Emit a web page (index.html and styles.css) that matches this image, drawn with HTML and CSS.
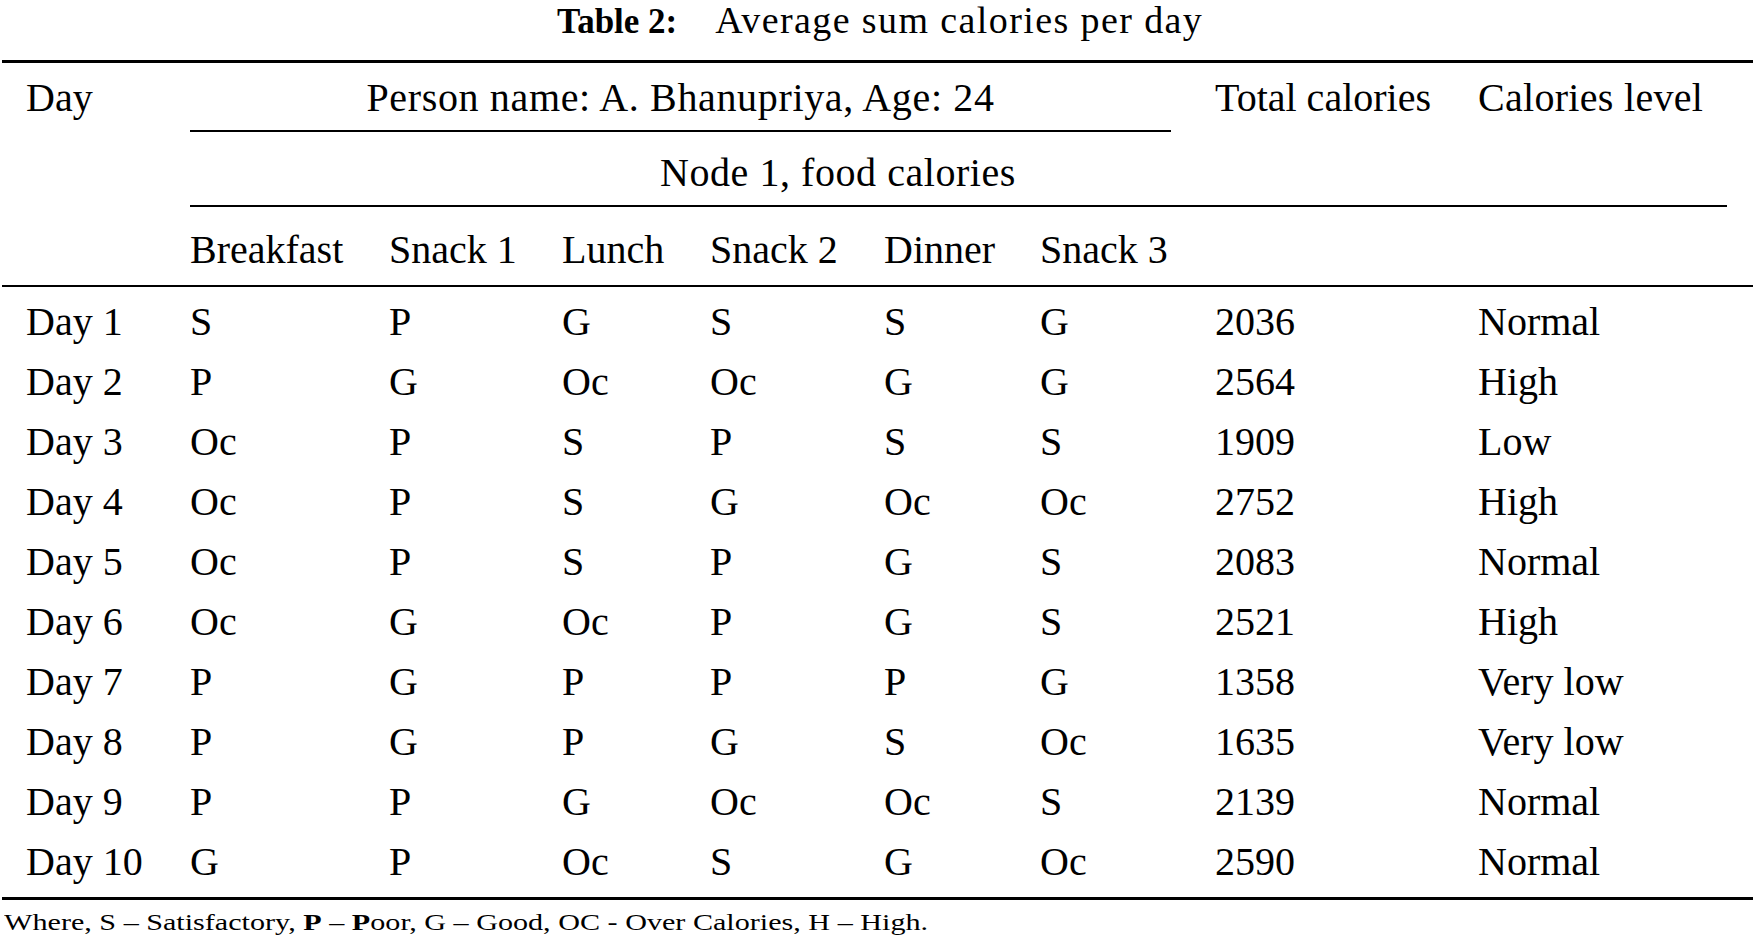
FILE: index.html
```html
<!DOCTYPE html>
<html lang="en">
<head>
<meta charset="utf-8">
<title>Table 2: Average sum calories per day</title>
<link rel="stylesheet" href="styles.css">
</head>
<body>
<div class="page">
  <div class="caption"><span class="cap-label">Table 2:</span> <span class="cap-text">Average sum calories per day</span></div>
  <div class="rule rule-top"></div>
  <div class="head">
    <div class="cell h1 c-day">Day</div>
    <div class="cell h1 c-person">Person name: A. Bhanupriya, Age: 24</div>
    <div class="cell h1 c-total">Total calories</div>
    <div class="cell h1 c-level">Calories level</div>
    <div class="rule rule-1"></div>
    <div class="cell h2 c-node">Node 1, food calories</div>
    <div class="rule rule-2"></div>
    <div class="cell h3 c2">Breakfast</div>
    <div class="cell h3 c3">Snack 1</div>
    <div class="cell h3 c4">Lunch</div>
    <div class="cell h3 c5">Snack 2</div>
    <div class="cell h3 c6">Dinner</div>
    <div class="cell h3 c7">Snack 3</div>
  </div>
  <div class="rule rule-mid"></div>
  <div class="body">
    <div class="row"><div class="cell first">Day 1</div><div class="cell">S</div><div class="cell">P</div><div class="cell">G</div><div class="cell">S</div><div class="cell">S</div><div class="cell">G</div><div class="cell">2036</div><div class="cell">Normal</div></div>
    <div class="row"><div class="cell first">Day 2</div><div class="cell">P</div><div class="cell">G</div><div class="cell">Oc</div><div class="cell">Oc</div><div class="cell">G</div><div class="cell">G</div><div class="cell">2564</div><div class="cell">High</div></div>
    <div class="row"><div class="cell first">Day 3</div><div class="cell">Oc</div><div class="cell">P</div><div class="cell">S</div><div class="cell">P</div><div class="cell">S</div><div class="cell">S</div><div class="cell">1909</div><div class="cell">Low</div></div>
    <div class="row"><div class="cell first">Day 4</div><div class="cell">Oc</div><div class="cell">P</div><div class="cell">S</div><div class="cell">G</div><div class="cell">Oc</div><div class="cell">Oc</div><div class="cell">2752</div><div class="cell">High</div></div>
    <div class="row"><div class="cell first">Day 5</div><div class="cell">Oc</div><div class="cell">P</div><div class="cell">S</div><div class="cell">P</div><div class="cell">G</div><div class="cell">S</div><div class="cell">2083</div><div class="cell">Normal</div></div>
    <div class="row"><div class="cell first">Day 6</div><div class="cell">Oc</div><div class="cell">G</div><div class="cell">Oc</div><div class="cell">P</div><div class="cell">G</div><div class="cell">S</div><div class="cell">2521</div><div class="cell">High</div></div>
    <div class="row"><div class="cell first">Day 7</div><div class="cell">P</div><div class="cell">G</div><div class="cell">P</div><div class="cell">P</div><div class="cell">P</div><div class="cell">G</div><div class="cell">1358</div><div class="cell">Very low</div></div>
    <div class="row"><div class="cell first">Day 8</div><div class="cell">P</div><div class="cell">G</div><div class="cell">P</div><div class="cell">G</div><div class="cell">S</div><div class="cell">Oc</div><div class="cell">1635</div><div class="cell">Very low</div></div>
    <div class="row"><div class="cell first">Day 9</div><div class="cell">P</div><div class="cell">P</div><div class="cell">G</div><div class="cell">Oc</div><div class="cell">Oc</div><div class="cell">S</div><div class="cell">2139</div><div class="cell">Normal</div></div>
    <div class="row"><div class="cell first">Day 10</div><div class="cell">G</div><div class="cell">P</div><div class="cell">Oc</div><div class="cell">S</div><div class="cell">G</div><div class="cell">Oc</div><div class="cell">2590</div><div class="cell">Normal</div></div>
  </div>
  <div class="rule rule-bottom"></div>
  <div class="note"><span class="note-text">Where, S – Satisfactory, <b>P</b> – <b>P</b>oor, G – Good, OC - Over Calories, H – High.</span></div>
</div>
</body>
</html>
```

FILE: styles.css
```css
html, body {
  margin: 0;
  padding: 0;
  background: #ffffff;
}

.page {
  width: 1753px;
  color: #000000;
  font-family: "Liberation Serif", "Times New Roman", serif;
}

.caption {
  height: 40px;
  line-height: 40px;
  padding-bottom: 20px;
  padding-left: 557px;
  white-space: nowrap;
}

.cap-label {
  font-weight: bold;
  font-size: 35px;
}

.cap-text {
  font-size: 38px;
  letter-spacing: 1.4px;
  margin-left: 34px;
}

.rule {
  background: #000000;
}

.rule-top {
  height: 3px;
  margin-left: 2px;
}

.rule-mid {
  height: 2px;
  margin-left: 2px;
}

.rule-bottom {
  height: 3px;
  margin-left: 2px;
}

.head,
.row {
  display: grid;
  grid-template-columns: 190px 199px 173px 148px 174px 156px 175px 263px 275px;
}

.head {
  grid-template-rows: 67px 2px 73px 2px 78px;
}

.cell {
  font-size: 40px;
  line-height: 40px;
  white-space: nowrap;
}

.h1 {
  grid-row: 1;
  padding-top: 15px;
}

.c-day {
  grid-column: 1;
  padding-left: 26px;
}

.c-person {
  grid-column: 2 / 8;
  text-align: center;
  margin-right: 44px;
  letter-spacing: 0.65px;
}

.c-total {
  grid-column: 8;
}

.c-level {
  grid-column: 9;
  letter-spacing: 0.3px;
}

.rule-1 {
  grid-row: 2;
  grid-column: 2 / 8;
  margin-right: 44px;
}

.h2 {
  grid-row: 3;
  padding-top: 21px;
}

.c-node {
  grid-column: 2 / 9;
  text-align: center;
  padding-left: 8px;
  letter-spacing: 0.55px;
}

.rule-2 {
  grid-row: 4;
  grid-column: 2 / 10;
  margin-right: 26px;
}

.h3 {
  grid-row: 5;
  padding-top: 23px;
}

.c2 { grid-column: 2; }
.c3 { grid-column: 3; }
.c4 { grid-column: 4; }
.c5 { grid-column: 5; }
.c6 { grid-column: 6; }
.c7 { grid-column: 7; }

.body {
  padding-top: 5px;
  padding-bottom: 5px;
}

.row {
  height: 60px;
  box-sizing: border-box;
  padding-top: 10px;
}

.row .first {
  padding-left: 26px;
}

.note {
  padding-top: 11px;
  padding-left: 4px;
  height: 30px;
}

.note-text {
  display: inline-block;
  font-size: 23px;
  line-height: 24px;
  white-space: nowrap;
  transform: scaleX(1.31);
  transform-origin: left center;
}

.note-text b {
  font-weight: bold;
}
```
